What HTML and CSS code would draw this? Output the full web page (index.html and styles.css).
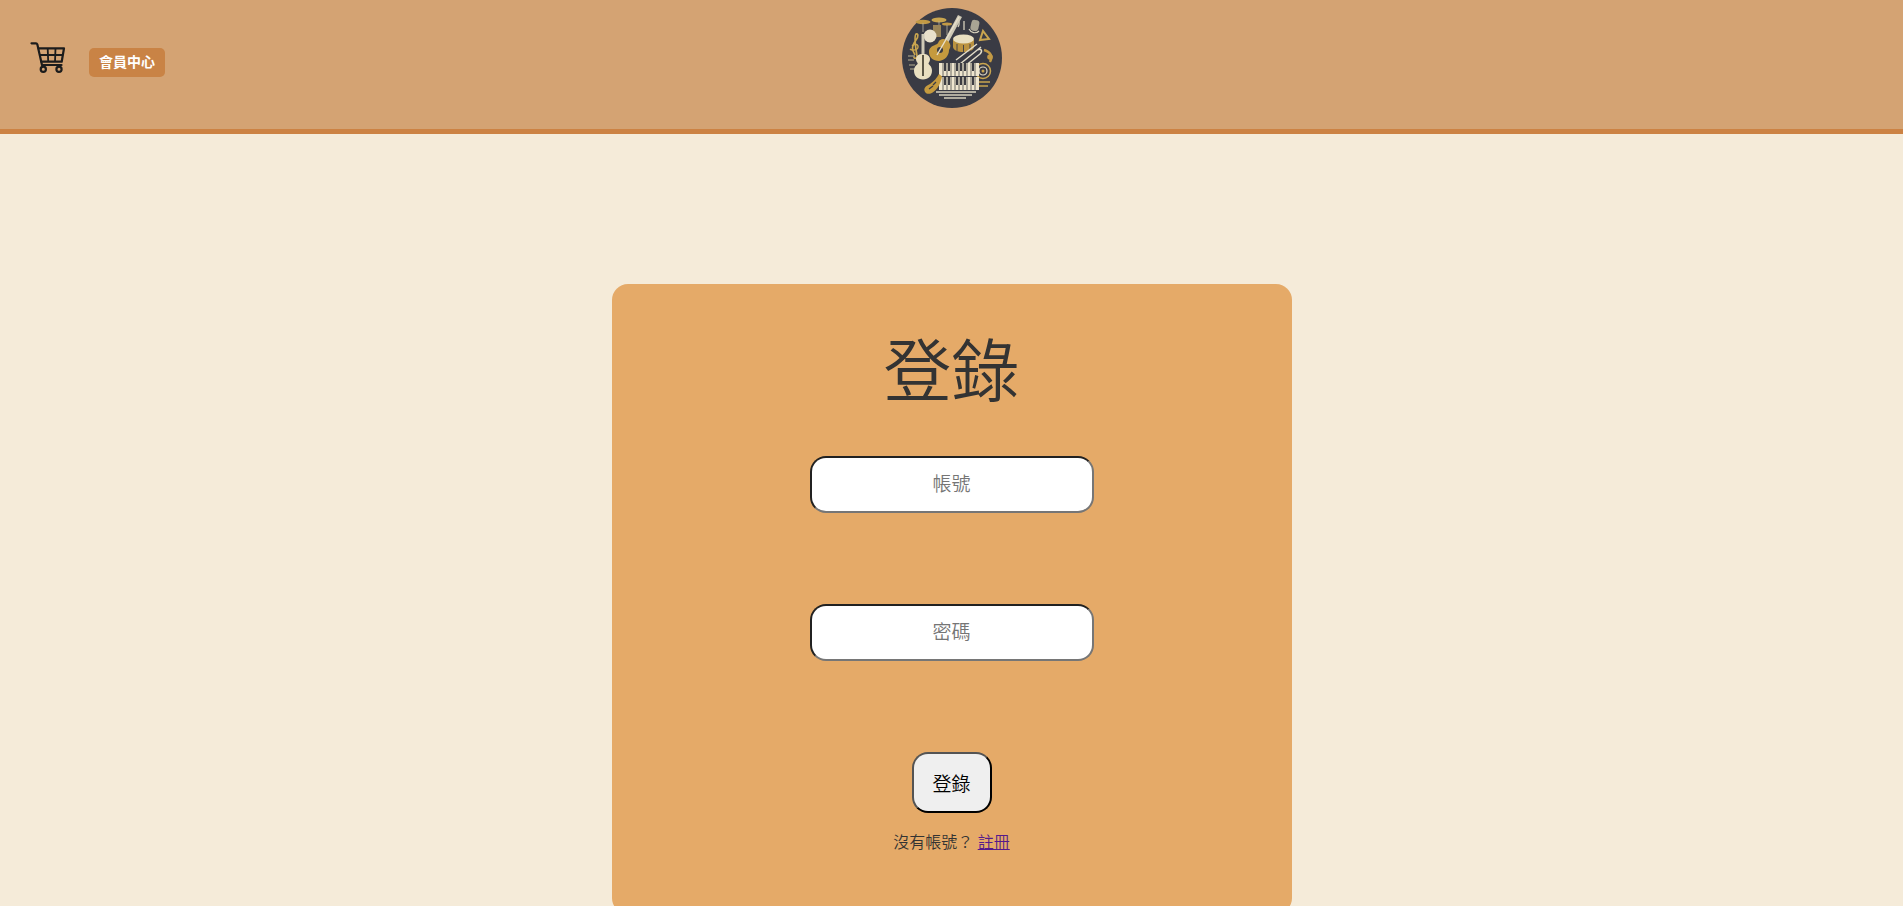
FILE: index.html
```html
<!DOCTYPE html>
<html lang="zh-Hant">

<head>
    <meta charset="UTF-8">
    <meta name="viewport" content="width=device-width, initial-scale=1.0">
    <title>登錄</title>
    <link rel="stylesheet" href="styles.css">
</head>

<body>
    <header class="header">
        <div class="header_left">
            <a href="javascript:;" class="cart" aria-label="購物車">
                <svg viewBox="0 0 36 34" width="36" height="34" fill="none" stroke="#1c1c1c" stroke-width="1.800">
                    <path d="M1.500 3.300H6c.7 0 1.100.4 1.300 1L12 25h19.500" stroke-width="2.200" stroke-linecap="round" stroke-linejoin="round" />
                    <path d="M7.700 8.300H34l-2.300 13.400H10.600" stroke-width="2.200" stroke-linejoin="round" />
                    <path d="M9.200 15h23.600M17.700 8.300l.5 13.400M25.500 8.300l-.5 13.400" />
                    <circle cx="13.300" cy="29.300" r="2.600" stroke-width="2.200" />
                    <circle cx="29" cy="29.300" r="2.600" stroke-width="2.200" />
                </svg>
            </a>
            <a href="javascript:;" class="member">會員中心</a>
        </div>
        <!-- 標誌 樂器圓形圖 -->
        <svg class="logo" viewBox="0 0 100 100" width="100" height="100">
            <circle cx="50" cy="50" r="50" fill="#3a3b44" />
            <!-- 鈸 -->
            <ellipse cx="21" cy="14" rx="7.500" ry="2.200" fill="#c39a45" />
            <ellipse cx="37" cy="12" rx="7.500" ry="2.500" fill="#c9a54f" />
            <ellipse cx="45" cy="16" rx="5" ry="1.500" fill="#c39a45" />
            <path d="M21 15v9M37 13v9M45 17v10" stroke="#b9b39f" stroke-width=".8" />
            <rect x="31" y="17" width="8" height="12" fill="#9a8558" />
            <circle cx="28" cy="28" r="6.500" fill="#e8e0cb" />
            <!-- 高音譜號 -->
            <path d="M13 47c-3-5-4-8 1-15 3-4 2-7 0-6-2 2 0 16 1 22 .5 3-4 3-3 0" fill="none" stroke="#c9a54f" stroke-width="1.700" />
            <path d="M10 38c4-4 8 0 5 3-3 2-6 1-7 0" fill="none" stroke="#c9a54f" stroke-width="1.400" />
            <path d="M6 48h7M6 52h6M7 57h6M8 61h5" stroke="#8f8a78" stroke-width="1.300" />
            <!-- 小提琴 -->
            <path d="M19.500 26h3v24h-3z" fill="#cfc9b6" />
            <path d="M21 46c-4.500 0-7 2-7 5.500 0 2 1.700 3 1.700 4 0 1-3.700 2.500-3.700 7 0 5.500 3.500 9 9 9s9-3.500 9-9c0-4.500-3.500-6-3.500-7 0-1 1.500-2 1.500-4 0-3.500-2.500-5.500-7-5.500z" fill="#e9dfc0" />
            <path d="M20 47h2v21h-2z" fill="#5b5645" />
            <!-- 吉他 -->
            <path d="M56 7l4 2-14 26-4-2z" fill="#cfc9b6" />
            <path d="M41 31c3 0 6 2 7 5 1 2 0 4-1 6 0 6-4 10-10 11-6 0-10-4-10-9 0-4 3-6 6-7 3-1 3-2 4-4 1-1 2-2 4-2z" fill="#c59a3e" />
            <circle cx="38" cy="42" r="3" fill="#3a3b44" />
            <path d="M57 9L35 47" stroke="#e8e0cb" stroke-width="1.400" />
            <!-- 鼓 -->
            <path d="M51 32v7c0 3 5 5 10.500 5s10.500-2 10.500-5v-7z" fill="#bb9340" />
            <ellipse cx="61.500" cy="31" rx="10.500" ry="4.500" fill="#e9dfc0" />
            <path d="M55 36v7M61.500 37v8M68 36v7" stroke="#3a3b44" stroke-width=".9" />
            <!-- 右上 音符 麥克風 -->
            <path d="M56 19c2-3 1-6 0-7M62 13v9" fill="none" stroke="#d8d2bd" stroke-width="1.300" />
            <rect x="69" y="12" width="8" height="11" rx="3" fill="#a9a594" transform="rotate(12 73 17)" />
            <path d="M67 21c2 4 7 5 10 2" fill="none" stroke="#d8d2bd" stroke-width="1.200" />
            <path d="M78 32l3-9 6 8z" fill="none" stroke="#c9a54f" stroke-width="2" />
            <!-- 長號 -->
            <path d="M54 52l21-16M58 56l21-17M63 58l15-12c3-3 1-6-2-4" fill="none" stroke="#e3ddc9" stroke-width="1.500" />
            <!-- 螺旋 -->
            <path d="M82 42c7 2 9 7 6 12" fill="none" stroke="#c39a45" stroke-width="2.400" />
            <circle cx="88" cy="49" r="2.800" fill="#c39a45" />
            <circle cx="81" cy="63" r="7.500" fill="none" stroke="#c9a54f" stroke-width="1.500" />
            <circle cx="81" cy="63" r="4" fill="none" stroke="#e3ddc9" stroke-width="1.200" />
            <circle cx="81" cy="63" r="1.500" fill="#c9a54f" />
            <path d="M77 74h11M77 78h9" stroke="#c9a54f" stroke-width="1.600" />
            <!-- 鋼琴 -->
            <rect x="37" y="55" width="40" height="13" fill="#efe6cf" />
            <rect x="37" y="69" width="40" height="13" fill="#efe6cf" />
            <path d="M41 55v13M45 55v13M49 55v13M53 55v13M57 55v13M61 55v13M65 55v13M69 55v13M73 55v13M41 69v13M45 69v13M49 69v13M53 69v13M57 69v13M61 69v13M65 69v13M69 69v13M73 69v13" stroke="#4a4a4a" stroke-width=".8" />
            <path d="M43 55v8M47 55v8M55 55v8M59 55v8M63 55v8M71 55v8M43 69v8M47 69v8M55 69v8M59 69v8M63 69v8M71 69v8" stroke="#2b2c33" stroke-width="1.800" />
            <path d="M34 84h40M37 87h33M42 90h22" stroke="#d8d2bd" stroke-width="1.400" />
            <!-- 薩克斯風 -->
            <path d="M37 66c-2 4-5 7-9 10-4 2-7 4-5 8 2 3 6 2 9-.5 4-3 7-9 8-15z" fill="#c59a3e" />
            <path d="M27 81l4-3M31 77l3-3" stroke="#3a3b44" stroke-width="1.300" />
        </svg>
        <div></div>
    </header>

    <main class="login">
        <h1 class="login_title">登錄</h1>
        <form class="login_form">
            <input type="text" class="login_input" placeholder="帳號" name="username">
            <input type="password" class="login_input" placeholder="密碼" name="password">
            <button type="button" class="login_button">登錄</button>
        </form>
        <p class="login_tip">沒有帳號？ <a href="#">註冊</a></p>
    </main>
</body>

</html>
```

FILE: styles.css
```css
* {
    margin: 0;
    padding: 0;
    box-sizing: border-box;
}

body {
    background-color: #f5ebd9;
    color: #333;
    font-family: "Liberation Sans", "Noto Sans CJK TC", sans-serif;
}

.header {
    display: grid;
    grid-template-columns: 1fr auto 1fr;
    align-items: start;
    height: 134px;
    padding-top: 8px;
    background-color: #d4a373;
    border-bottom: 5px solid #cc8243;
}

.header_left {
    display: flex;
    align-items: center;
    height: 100px;
    padding-left: 30px;
    padding-top: 9px;
}

.cart {
    display: block;
    height: 34px;
    margin-top: -11px;
}

.member {
    margin-left: 23px;
    padding: 6px 10px;
    border-radius: 5px;
    background-color: #c98345;
    color: #fff;
    font-size: 14px;
    line-height: 17px;
    font-weight: 700;
    text-decoration: none;
}

.logo {
    display: block;
    filter: blur(.3px);
}

.login {
    width: 680px;
    height: 630px;
    margin: 150px auto 0;
    padding-top: 49px;
    border-radius: 16px;
    background-color: #e5aa68;
    text-align: center;
}

.login_title {
    font-size: 68px;
    line-height: 78px;
    font-weight: 350;
}

.login_form {
    display: flex;
    flex-direction: column;
    align-items: center;
    margin-top: 45px;
}

.login_input {
    width: 284px;
    height: 57px;
    margin-bottom: 91px;
    border: 2px inset #767676;
    border-radius: 16px;
    background-color: #fff;
    font-family: inherit;
    font-size: 19px;
    font-weight: 350;
    text-align: center;
}

.login_button {
    width: 80px;
    height: 61px;
    border: 2px outset #000;
    border-radius: 16px;
    background-color: #efefef;
    color: #000;
    font-family: inherit;
    font-size: 19px;
    font-weight: 350;
}

.login_tip {
    margin-top: 20px;
    font-size: 16px;
    line-height: 20px;
    font-weight: 350;
}

.login_tip a {
    color: #551a8b;
}
```
